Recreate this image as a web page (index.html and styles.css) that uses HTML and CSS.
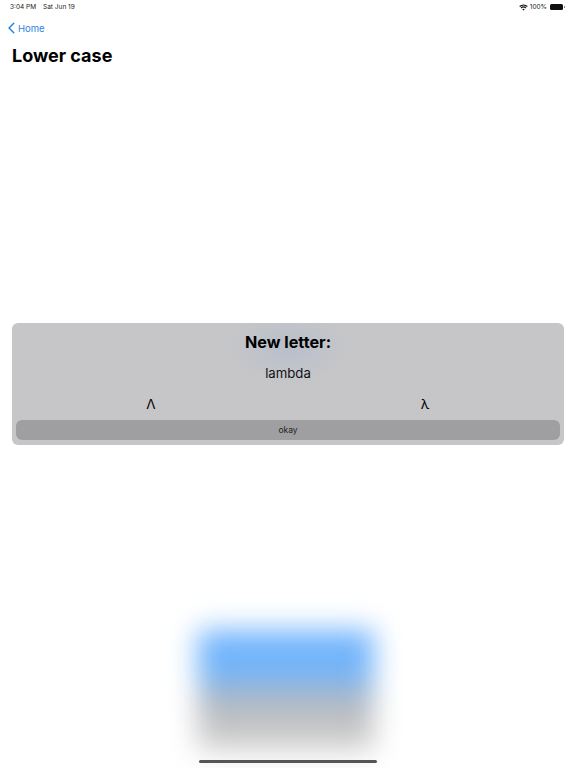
FILE: index.html
```html
<!DOCTYPE html>
<html lang="en">
<head>
<meta charset="utf-8">
<title>Lower case</title>
<link rel="stylesheet" href="styles.css">
</head>
<body>
<div class="screen">
  <header class="status">
    <div class="status-left"><span>3:04 PM</span><span>Sat Jun 19</span></div>
    <div class="status-right">
      <svg class="wifi" viewBox="0 0 12 9" aria-hidden="true"><path d="M6 8.6 4.3 6.8a2.5 2.5 0 0 1 3.4 0zM3.3 5.8 2.2 4.6a5.6 5.6 0 0 1 7.6 0L8.7 5.8a4 4 0 0 0-5.4 0zM1.4 3.8.3 2.6a8.4 8.4 0 0 1 11.4 0l-1.1 1.2a6.8 6.8 0 0 0-9.2 0z"/></svg>
      <span>100%</span>
      <span class="battery"><span class="battery-fill"></span></span>
    </div>
  </header>
  <nav class="nav">
    <svg class="chevron" viewBox="0 0 8 13" aria-hidden="true"><path d="M6.6 1 1.2 6.5l5.4 5.5"/></svg>
    <span>Home</span>
  </nav>
  <h1 class="title">Lower case</h1>
  <main class="content">
    <section class="card">
      <h2 class="card-title">New letter:</h2>
      <p class="name">lambda</p>
      <div class="letters"><span>Λ</span><span>λ</span></div>
      <button class="okay" type="button">okay</button>
    </section>
  </main>
  <div class="blur-blob"></div>
  <div class="home-indicator"></div>
</div>
</body>
</html>
```
FILE: styles.css
```css
* { box-sizing: border-box; }
html, body { margin: 0; padding: 0; }
body { background: #fff; font-family: Inter, "Liberation Sans", sans-serif; color: #000; }
.screen { position: relative; width: 576px; height: 768px; overflow: hidden; display: flex; flex-direction: column; background: #fff; }
.status { height: 14px; padding: 0 12px 0 10px; display: flex; justify-content: space-between; align-items: center; font-size: 6.5px; color: #222; flex: none; }
.status-left { display: flex; gap: 7px; }
.status-right { display: flex; align-items: center; gap: 2px; }
.wifi { width: 9px; height: 7px; fill: #111; }
.battery { width: 13px; height: 6px; margin-left: 1px; margin-right: 1px; border-radius: 1.5px; background: #111; position: relative; display: block; }
.battery-fill { position: absolute; right: -1.5px; top: 2px; width: 1px; height: 2px; background: #888; }
.nav { height: 28px; flex: none; padding-left: 8px; display: flex; align-items: center; gap: 3px; color: #2a85e0; font-size: 9.5px; }
.chevron { width: 7px; height: 12px; fill: none; stroke: #1f7fe0; stroke-width: 1.6; stroke-linecap: round; stroke-linejoin: round; }
.title { margin: 0; padding: 2px 12px 0; font-size: 18px; line-height: 24px; font-weight: 700; flex: none; }
.content { flex: 1; padding: 255px 12px 0; }
.card { height: 122px; border-radius: 6px; padding-top: 8px; background: radial-gradient(ellipse 60px 38px at 50% 24px, #b8beca 0%, #c0c3ca 55%, #c6c6c8 100%); display: flex; flex-direction: column; align-items: center; }
.card-title { margin: 0; font-size: 16.2px; line-height: 22px; font-weight: 700; }
.name { margin: 11px 0 0; font-size: 13.2px; line-height: 18px; color: #111; }
.letters { width: 100%; margin-top: 13px; display: grid; grid-template-columns: 1fr 1fr; justify-items: center; font-size: 13.5px; line-height: 18px; padding: 0 2px; }
.okay { width: 544px; height: 20px; margin-top: 7px; border: 0; border-radius: 6px; background: #9f9fa1; color: #222; font: 8.5px/20px Inter, "Liberation Sans", sans-serif; padding: 0; }
.blur-blob { position: absolute; left: 198px; top: 630px; width: 176px; height: 120px; filter: blur(14px); background: linear-gradient(#6fb3fc 0%, #73b5fb 36%, #a9b7c8 54%, #bfbfc0 72%, #d2d2d2 100%); }
.home-indicator { position: absolute; left: 199px; top: 760px; width: 178px; height: 3px; border-radius: 2px; background: #555; }
```
